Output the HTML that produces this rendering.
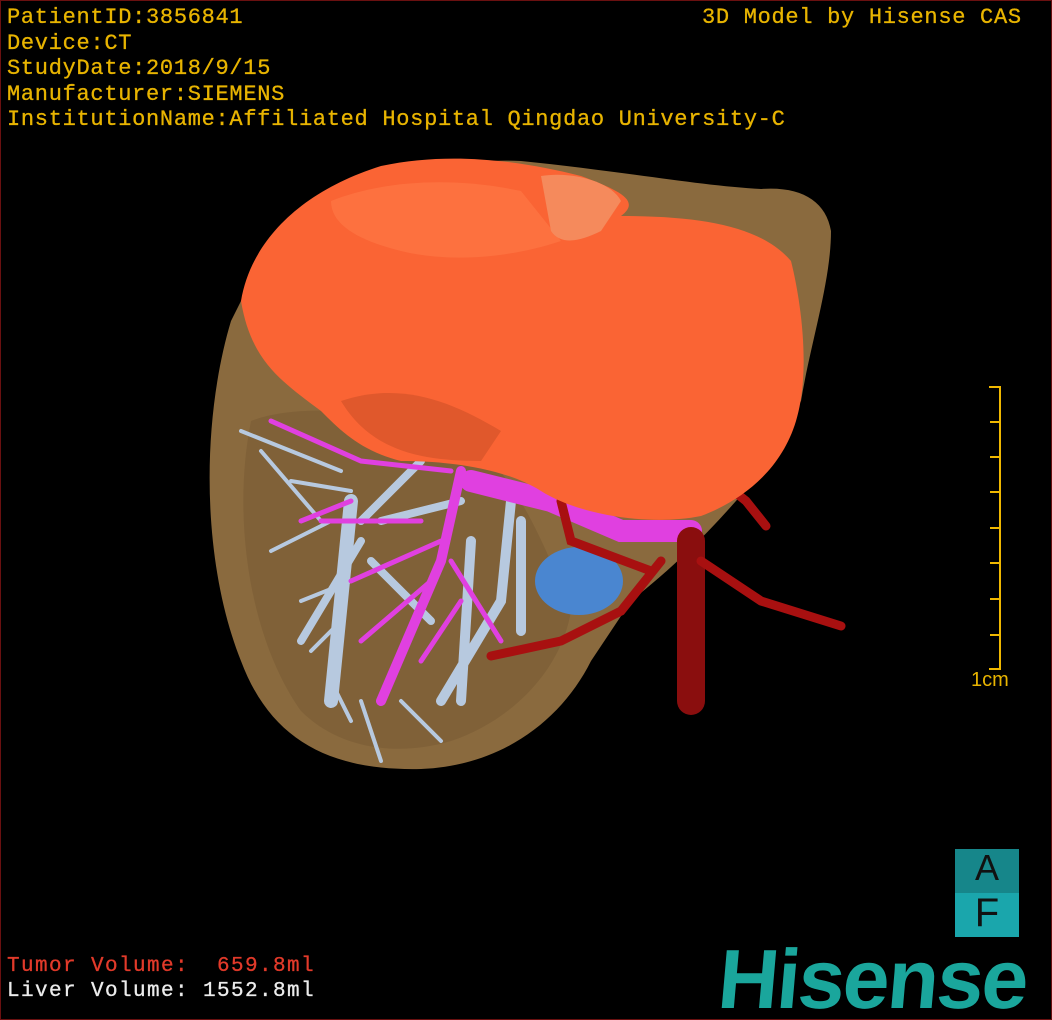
<!DOCTYPE html>
<html><head><meta charset="utf-8"><style>
html,body{margin:0;padding:0;background:#000}
#c{position:relative;width:1052px;height:1020px;overflow:hidden;background:#000;box-sizing:border-box;border:1px solid #6a1010;font-family:"Liberation Mono","DejaVu Sans Mono",monospace}
.t{position:absolute;color:#e8b400;font-size:22px;line-height:25px;white-space:pre;letter-spacing:0.7px;-webkit-text-stroke:0.3px #e8b400}
.r{position:absolute;color:#e23a2a;font-size:21px;white-space:pre;letter-spacing:1.4px;-webkit-text-stroke:0.3px #e23a2a}
.w{position:absolute;color:#ececec;font-size:21px;white-space:pre;letter-spacing:1.4px;-webkit-text-stroke:0.3px #ececec}
</style></head><body><div id="c">
<svg width="1052" height="1020" style="position:absolute;left:0;top:0">
<path d="M230 320 C200 420 200 560 240 660 C270 740 330 770 420 768 C500 765 560 720 590 660 L630 600 C680 560 720 520 760 470 L800 400 C810 340 830 280 830 230 C825 200 800 185 760 188 C700 185 620 170 520 160 C420 155 300 200 250 280 Z" fill="#8a6a3e"/>
<path d="M250 420 C230 520 250 640 300 710 C340 750 400 755 450 740 C510 720 560 670 570 610 C550 560 520 480 470 440 C400 410 300 400 250 420 Z" fill="#7a5c35" opacity="0.6"/>
<g stroke="#b7c9df" stroke-linecap="round" fill="none">
<path d="M350 500 L330 700" stroke-width="14"/>
<path d="M360 520 L420 460 M360 540 L300 640 M370 560 L430 620 M380 520 L460 500" stroke-width="8"/>
<path d="M510 500 L500 600 L440 700 M470 540 L460 700 M520 520 L520 630" stroke-width="10"/>
<path d="M240 430 L340 470 M260 450 L320 520 M270 550 L330 520 M300 600 L350 580 M310 650 L340 620 M290 480 L350 490 M330 680 L350 720 M400 700 L440 740 M360 700 L380 760" stroke-width="4"/>
</g>
<g stroke="#e040e0" stroke-linecap="round" fill="none">
<path d="M460 470 L440 560 L380 700" stroke-width="10"/>
<path d="M470 480 L550 500 L620 530 L690 530" stroke-width="22"/>
<path d="M440 540 L350 580 M430 580 L360 640 M420 520 L320 520 M450 560 L500 640 M460 600 L420 660" stroke-width="5"/>
<path d="M270 420 L360 460 L450 470 M300 520 L350 500" stroke-width="5"/>
</g>
<ellipse cx="578" cy="580" rx="44" ry="34" fill="#4a86d0"/>
<g stroke="#a81010" stroke-linecap="round" fill="none">
<path d="M690 540 L690 700" stroke-width="28" stroke="#8a0e0e"/>
<path d="M560 500 L570 540 L650 570 M660 560 L620 610 L560 640 L490 655" stroke-width="9"/>
<path d="M700 560 L760 600 L840 625" stroke-width="9"/>
<path d="M720 480 L745 500 L765 525" stroke-width="9"/>
</g>
<path d="M240 300 C250 240 300 190 380 165 C450 150 520 160 580 175 C620 190 640 200 620 215 C700 215 760 225 790 260 C800 300 810 370 795 420 C780 470 740 500 700 515 C650 525 580 515 540 490 C500 465 440 460 400 460 C360 450 340 430 320 410 C280 380 250 360 240 300 Z" fill="#fa6434"/>
<path d="M330 200 C380 180 450 175 520 190 L560 240 C500 260 440 260 400 250 C360 240 330 225 330 200 Z" fill="#ff7a48" opacity="0.6"/>
<path d="M340 400 C400 380 450 400 500 430 L480 460 C420 460 370 450 340 400 Z" fill="#e0582c"/>
<path d="M540 175 C570 170 610 180 620 200 L600 230 C580 240 560 245 550 230 Z" fill="#f58a5c"/>
<g stroke="#f0b800" stroke-width="2" fill="none">
<path d="M999 385 L999 669"/>
<path d="M988 386 L999 386 M989 421 L999 421 M989 456 L999 456 M989 491 L999 491 M989 527 L999 527 M989 562 L999 562 M989 598 L999 598 M989 634 L999 634 M988 668 L999 668"/>
</g>
<rect x="954" y="848" width="64" height="44" fill="#16868a"/>
<rect x="954" y="892" width="64" height="44" fill="#1aa6ac"/>
</svg>
<div class="t" style="left:6px;top:4px">PatientID:3856841</div>
<div class="t" style="left:6px;top:30px">Device:CT</div>
<div class="t" style="left:6px;top:55px">StudyDate:2018/9/15</div>
<div class="t" style="left:6px;top:81px">Manufacturer:SIEMENS</div>
<div class="t" style="left:6px;top:106px">InstitutionName:Affiliated Hospital Qingdao University-C</div>
<div class="t" style="left:701px;top:4px">3D Model by Hisense CAS</div>
<div style="position:absolute;left:970px;top:668px;color:#e8b400;font:20px 'Liberation Sans',sans-serif">1cm</div>
<div style="position:absolute;left:954px;top:846px;width:64px;text-align:center;font:36px 'Liberation Sans',sans-serif;color:#111">A</div>
<div style="position:absolute;left:954px;top:890px;width:64px;text-align:center;font:40px 'Liberation Sans',sans-serif;color:#111">F</div>
<div style="position:absolute;left:722px;top:928px;font:bold 84px 'Liberation Sans',sans-serif;color:#1aa69c;letter-spacing:-2px;line-height:100px;transform-origin:0 0;transform:skewX(-5deg)">Hisense</div>
<div class="r" style="left:6px;top:954px">Tumor Volume:  659.8ml</div>
<div class="w" style="left:6px;top:979px">Liver Volume: 1552.8ml</div>
</div></body></html>
